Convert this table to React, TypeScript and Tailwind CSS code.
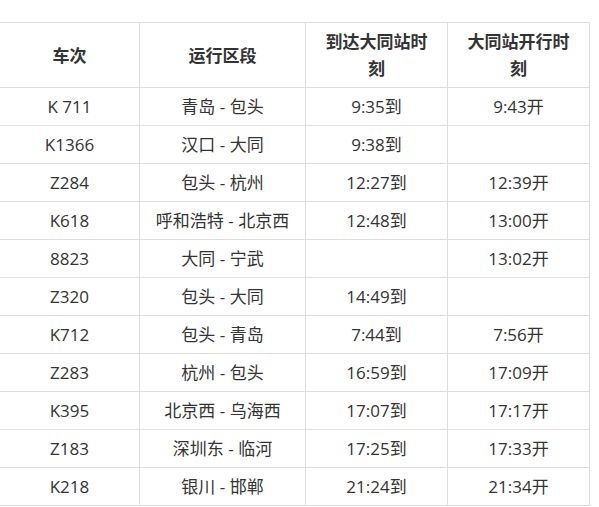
import React from "react";

const rows: [string, string, string, string][] = [
  ["K 711", "青岛 - 包头", "9:35到", "9:43开"],
  ["K1366", "汉口 - 大同", "9:38到", ""],
  ["Z284", "包头 - 杭州", "12:27到", "12:39开"],
  ["K618", "呼和浩特 - 北京西", "12:48到", "13:00开"],
  ["8823", "大同 - 宁武", "", "13:02开"],
  ["Z320", "包头 - 大同", "14:49到", ""],
  ["K712", "包头 - 青岛", "7:44到", "7:56开"],
  ["Z283", "杭州 - 包头", "16:59到", "17:09开"],
  ["K395", "北京西 - 乌海西", "17:07到", "17:17开"],
  ["Z183", "深圳东 - 临河", "17:25到", "17:33开"],
  ["K218", "银川 - 邯郸", "21:24到", "21:34开"],
];

const headers = ["车次", "运行区段", "到达大同站时刻", "大同站开行时刻"];

export default function App() {
  return (
    <div
      className="w-[599px] h-[507px] overflow-hidden bg-white pt-[22px] text-[#333]"
      style={{ fontFamily: '"Open Sans", "Noto Sans CJK SC", sans-serif' }}
    >
      <table className="ml-[-1px] w-[590px] table-fixed border-collapse text-[17px]">
        <colgroup>
          <col className="w-[140px]" />
          <col className="w-[166px]" />
          <col className="w-[142px]" />
          <col className="w-[142px]" />
        </colgroup>
        <thead>
          <tr className="h-[65px]">
            {headers.map((h) => (
              <th
                key={h}
                className="border border-[#ddd] px-[14px] text-center align-middle font-bold leading-[27px]"
              >
                {h}
              </th>
            ))}
          </tr>
        </thead>
        <tbody>
          {rows.map((r) => (
            <tr key={r[0]} className="h-[38px]">
              {r.map((c, i) => (
                <td
                  key={i}
                  className="border border-[#ddd] px-[14px] text-center align-middle leading-[24px]"
                >
                  {c}
                </td>
              ))}
            </tr>
          ))}
        </tbody>
      </table>
    </div>
  );
}
